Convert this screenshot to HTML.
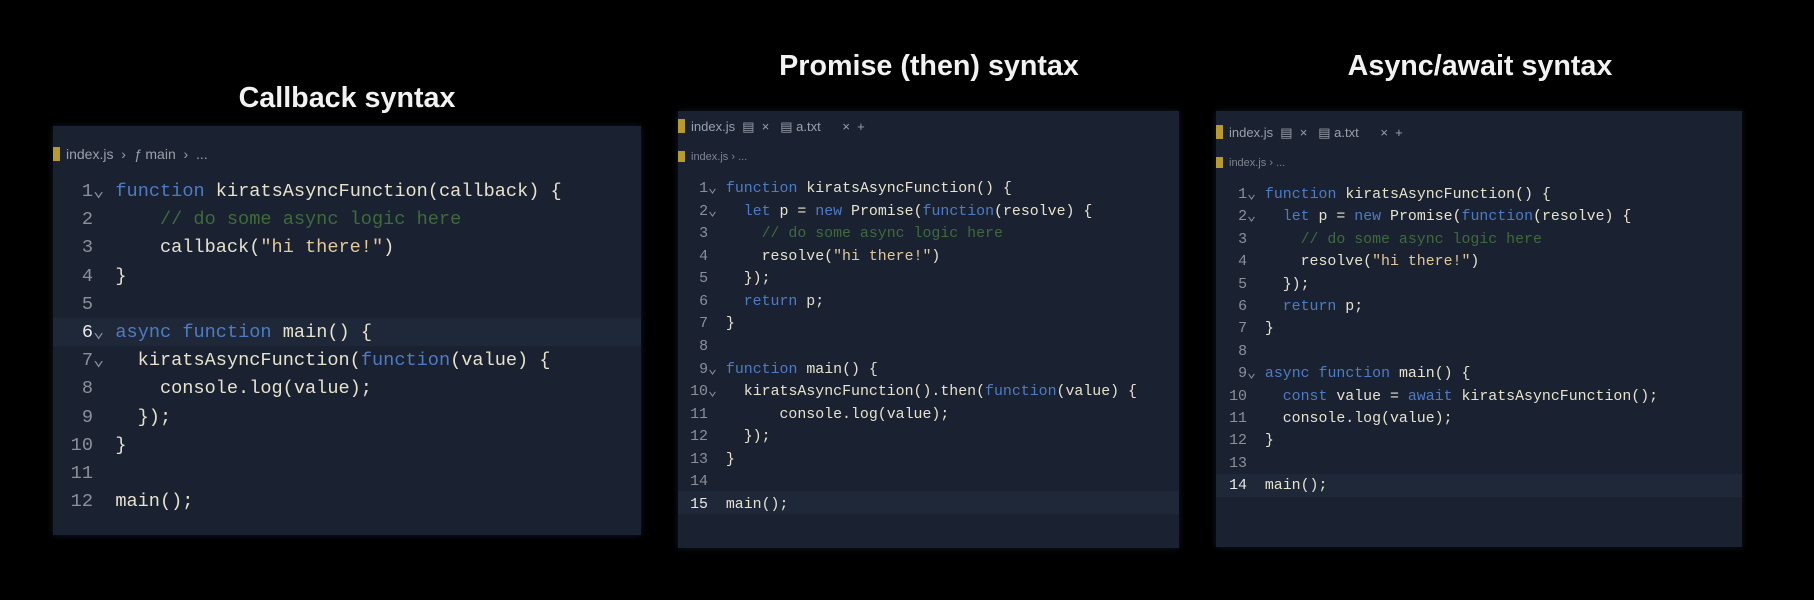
<!DOCTYPE html>
<html><head><meta charset="utf-8"><style>
body{margin:0;width:1814px;height:600px;background:#000;overflow:hidden;position:relative;font-family:"Liberation Sans",sans-serif}
.t{position:absolute;color:#f2f2f2;font-weight:bold;font-size:28.7px;transform:translateX(-50%);white-space:nowrap;top:50px}
.p{position:absolute;background:#1a2131;box-shadow:0 0 6px #111a28}
.code{position:absolute;margin:0;font-family:"Liberation Mono",monospace;color:#e6e2cc;white-space:pre}
.n{color:#8b909a;display:inline-block;text-align:right}
.k{color:#4d7cc4}.c{color:#3f6b3c}.s{color:#e2c99a}.w{color:#e8e8e8}
.hl{position:absolute;background:#1f2839}
.bc{position:absolute;color:#9aa0ab;font-size:14px;white-space:nowrap}
.ic{display:inline-block;width:7px;height:14px;background:#b99a2a;vertical-align:-2px;margin-right:6px}
</style></head><body>
<div class="t" style="left:347px;top:82px">Callback syntax</div>
<div class="t" style="left:929px">Promise (then) syntax</div>
<div class="t" style="left:1480px">Async/await syntax</div>

<div class="p" style="left:53px;top:126px;width:588px;height:409px">
<div class="hl" style="left:0;top:192px;width:588px;height:28px"></div>
<div class="bc" style="left:0;top:20px"><span class="ic"></span>index.js &nbsp;›&nbsp; <i>ƒ</i> main &nbsp;›&nbsp; ...</div>
<pre class="code" style="left:12px;top:52px;font-size:18.6px;line-height:28.2px"><span class="n" style="width:28px"> 1</span><span class="n">⌄</span> <span class="k">function</span> kiratsAsyncFunction(callback) {
<span class="n" style="width:28px">2</span>      <span class="c">// do some async logic here</span>
<span class="n" style="width:28px">3</span>      callback(<span class="s">"hi there!"</span>)
<span class="n" style="width:28px">4</span>  }
<span class="n" style="width:28px">5</span>
<span class="n w" style="width:28px">6</span><span class="n">⌄</span> <span class="k">async function</span> main() {
<span class="n" style="width:28px">7</span><span class="n">⌄</span>   kiratsAsyncFunction(<span class="k">function</span>(value) {
<span class="n" style="width:28px">8</span>      console.log(value);
<span class="n" style="width:28px">9</span>    });
<span class="n" style="width:28px">10</span>  }
<span class="n" style="width:28px">11</span>
<span class="n" style="width:28px">12</span>  main();</pre>
</div>

<div class="p" style="left:678px;top:111px;width:501px;height:437px">
<div class="hl" style="left:0;top:380px;width:501px;height:23px"></div>
<div class="bc" style="left:0;top:8px;font-size:13px"><span class="ic"></span>index.js &nbsp;▤ &nbsp;× &nbsp;&nbsp;▤ a.txt &nbsp;&nbsp;&nbsp;&nbsp;&nbsp;× &nbsp;+</div>
<div class="bc" style="left:0;top:40px;font-size:11px;color:#7e8490"><span class="ic" style="height:11px"></span>index.js › ...</div>
<pre class="code" style="left:10px;top:67px;font-size:14.9px;line-height:22.56px"><span class="n" style="width:20px">1</span><span class="n">⌄</span> <span class="k">function</span> kiratsAsyncFunction() {
<span class="n" style="width:20px">2</span><span class="n">⌄</span>   <span class="k">let</span> p = <span class="k">new</span> Promise(<span class="k">function</span>(resolve) {
<span class="n" style="width:20px">3</span>      <span class="c">// do some async logic here</span>
<span class="n" style="width:20px">4</span>      resolve(<span class="s">"hi there!"</span>)
<span class="n" style="width:20px">5</span>    });
<span class="n" style="width:20px">6</span>    <span class="k">return</span> p;
<span class="n" style="width:20px">7</span>  }
<span class="n" style="width:20px">8</span>
<span class="n" style="width:20px">9</span><span class="n">⌄</span> <span class="k">function</span> main() {
<span class="n" style="width:20px">10</span><span class="n">⌄</span>   kiratsAsyncFunction().then(<span class="k">function</span>(value) {
<span class="n" style="width:20px">11</span>        console.log(value);
<span class="n" style="width:20px">12</span>    });
<span class="n" style="width:20px">13</span>  }
<span class="n" style="width:20px">14</span>
<span class="n w" style="width:20px">15</span>  main();</pre>
</div>

<div class="p" style="left:1216px;top:111px;width:526px;height:436px">
<div class="hl" style="left:0;top:363px;width:526px;height:23px"></div>
<div class="bc" style="left:0;top:14px;font-size:13px"><span class="ic"></span>index.js &nbsp;▤ &nbsp;× &nbsp;&nbsp;▤ a.txt &nbsp;&nbsp;&nbsp;&nbsp;&nbsp;× &nbsp;+</div>
<div class="bc" style="left:0;top:46px;font-size:11px;color:#7e8490"><span class="ic" style="height:11px"></span>index.js › ...</div>
<pre class="code" style="left:11px;top:73px;font-size:14.9px;line-height:22.4px"><span class="n" style="width:20px">1</span><span class="n">⌄</span> <span class="k">function</span> kiratsAsyncFunction() {
<span class="n" style="width:20px">2</span><span class="n">⌄</span>   <span class="k">let</span> p = <span class="k">new</span> Promise(<span class="k">function</span>(resolve) {
<span class="n" style="width:20px">3</span>      <span class="c">// do some async logic here</span>
<span class="n" style="width:20px">4</span>      resolve(<span class="s">"hi there!"</span>)
<span class="n" style="width:20px">5</span>    });
<span class="n" style="width:20px">6</span>    <span class="k">return</span> p;
<span class="n" style="width:20px">7</span>  }
<span class="n" style="width:20px">8</span>
<span class="n" style="width:20px">9</span><span class="n">⌄</span> <span class="k">async function</span> main() {
<span class="n" style="width:20px">10</span>    <span class="k">const</span> value = <span class="k">await</span> kiratsAsyncFunction();
<span class="n" style="width:20px">11</span>    console.log(value);
<span class="n" style="width:20px">12</span>  }
<span class="n" style="width:20px">13</span>
<span class="n w" style="width:20px">14</span>  main();</pre>
</div>
</body></html>
